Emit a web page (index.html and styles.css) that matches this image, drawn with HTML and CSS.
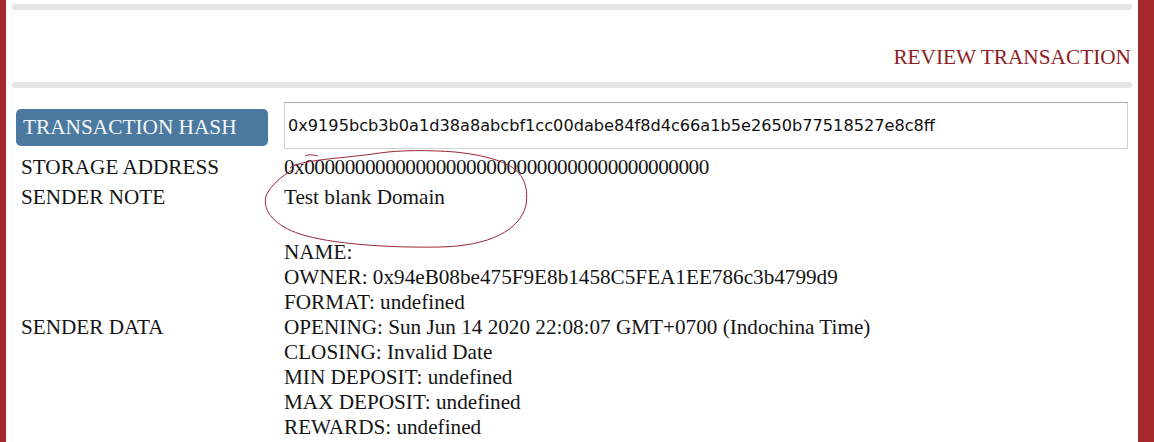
FILE: index.html
```html
<!DOCTYPE html>
<html>
<head>
<meta charset="utf-8">
<link rel="stylesheet" href="styles.css">
</head>
<body>
<div class="frame">
  <div class="content">
    <div class="rule"></div>
    <div class="title-row"><span class="title">REVIEW TRANSACTION</span></div>
    <div class="rule"></div>
    <div class="details">
      <div class="hash-label">TRANSACTION HASH</div>
      <div class="hash-input">0x9195bcb3b0a1d38a8abcbf1cc00dabe84f8d4c66a1b5e2650b77518527e8c8ff</div>

      <div class="label">STORAGE ADDRESS</div>
      <div class="value addr">0x0000000000000000000000000000000000000000</div>

      <div class="label">SENDER NOTE</div>
      <div class="value">Test blank Domain</div>

      <div class="label label-mid">SENDER DATA</div>
      <div class="value">
        <div class="line">&nbsp;</div>
        <div class="line">NAME:</div>
        <div class="line">OWNER: 0x94eB08be475F9E8b1458C5FEA1EE786c3b4799d9</div>
        <div class="line">FORMAT: undefined</div>
        <div class="line">OPENING: Sun Jun 14 2020 22:08:07 GMT+0700 (Indochina Time)</div>
        <div class="line">CLOSING: Invalid Date</div>
        <div class="line">MIN DEPOSIT: undefined</div>
        <div class="line">MAX DEPOSIT: undefined</div>
        <div class="line">REWARDS: undefined</div>
      </div>
    </div>
  </div>
  <svg class="scribble" width="1154" height="442" viewBox="0 0 1154 442">
    <path d="M305,156 C309,154 314,155 318,156 M292,170 C282,176 270,186 266,196 C262,212 276,226 300,234 C330,244 390,248 440,247 C490,246 520,230 526,205 C529,185 522,172 508,165 C495,158 475,154 455,152 C430,150 400,150 380,153 C360,156 335,158 320,160 C305,162 295,164 290,168" fill="none" stroke="#9a2638" stroke-width="1"/>
  </svg>
</div>
</body>
</html>
```

FILE: styles.css
```css
html, body {
  margin: 0;
  padding: 0;
  background: #ffffff;
}

.frame {
  position: relative;
  width: 1154px;
  height: 442px;
  overflow: hidden;
  box-sizing: border-box;
  border-left: 6px solid #a62a2d;
  border-right: 16px solid #a62a2d;
  font-family: "Liberation Serif", "Times New Roman", serif;
  color: #141414;
}

.content {
  padding: 4px 6px 0 6px;
  width: 1120px;
}

.rule {
  height: 6px;
  background: #e5e5e5;
  border-radius: 3px;
}

.title-row {
  height: 72px;
  display: flex;
  align-items: flex-end;
  justify-content: flex-end;
}

.title {
  font-size: 21.3px;
  line-height: 24px;
  color: #8c1d24;
  margin-bottom: 13px;
  margin-right: 1px;
}

.details {
  display: grid;
  grid-template-columns: 252px 844px;
  column-gap: 16px;
  padding: 14px 0 0 4px;
  font-size: 21.2px;
}

.hash-label {
  align-self: center;
  height: 37px;
  box-sizing: border-box;
  background: #4c79a0;
  color: #f4f6f8;
  border-radius: 5px;
  font-size: 21.3px;
  line-height: 37px;
  padding-left: 7px;
}

.hash-input {
  height: 47px;
  box-sizing: border-box;
  border: 1px solid #d2d2d2;
  border-top-color: #a9a9a9;
  font-family: "DejaVu Sans", Verdana, sans-serif;
  font-size: 16.15px;
  line-height: 45px;
  padding-left: 3px;
  color: #111;
  margin-bottom: 3px;
}

.label {
  padding: 2.5px 0 2.5px 5px;
  line-height: 25px;
}

.label-mid {
  align-self: center;
}

.value {
  padding: 2.5px 0;
  line-height: 25px;
}

.addr {
  letter-spacing: -0.48px;
}

.line {
  white-space: nowrap;
}

.scribble {
  position: absolute;
  left: -6px;
  top: 0;
  pointer-events: none;
}
```
